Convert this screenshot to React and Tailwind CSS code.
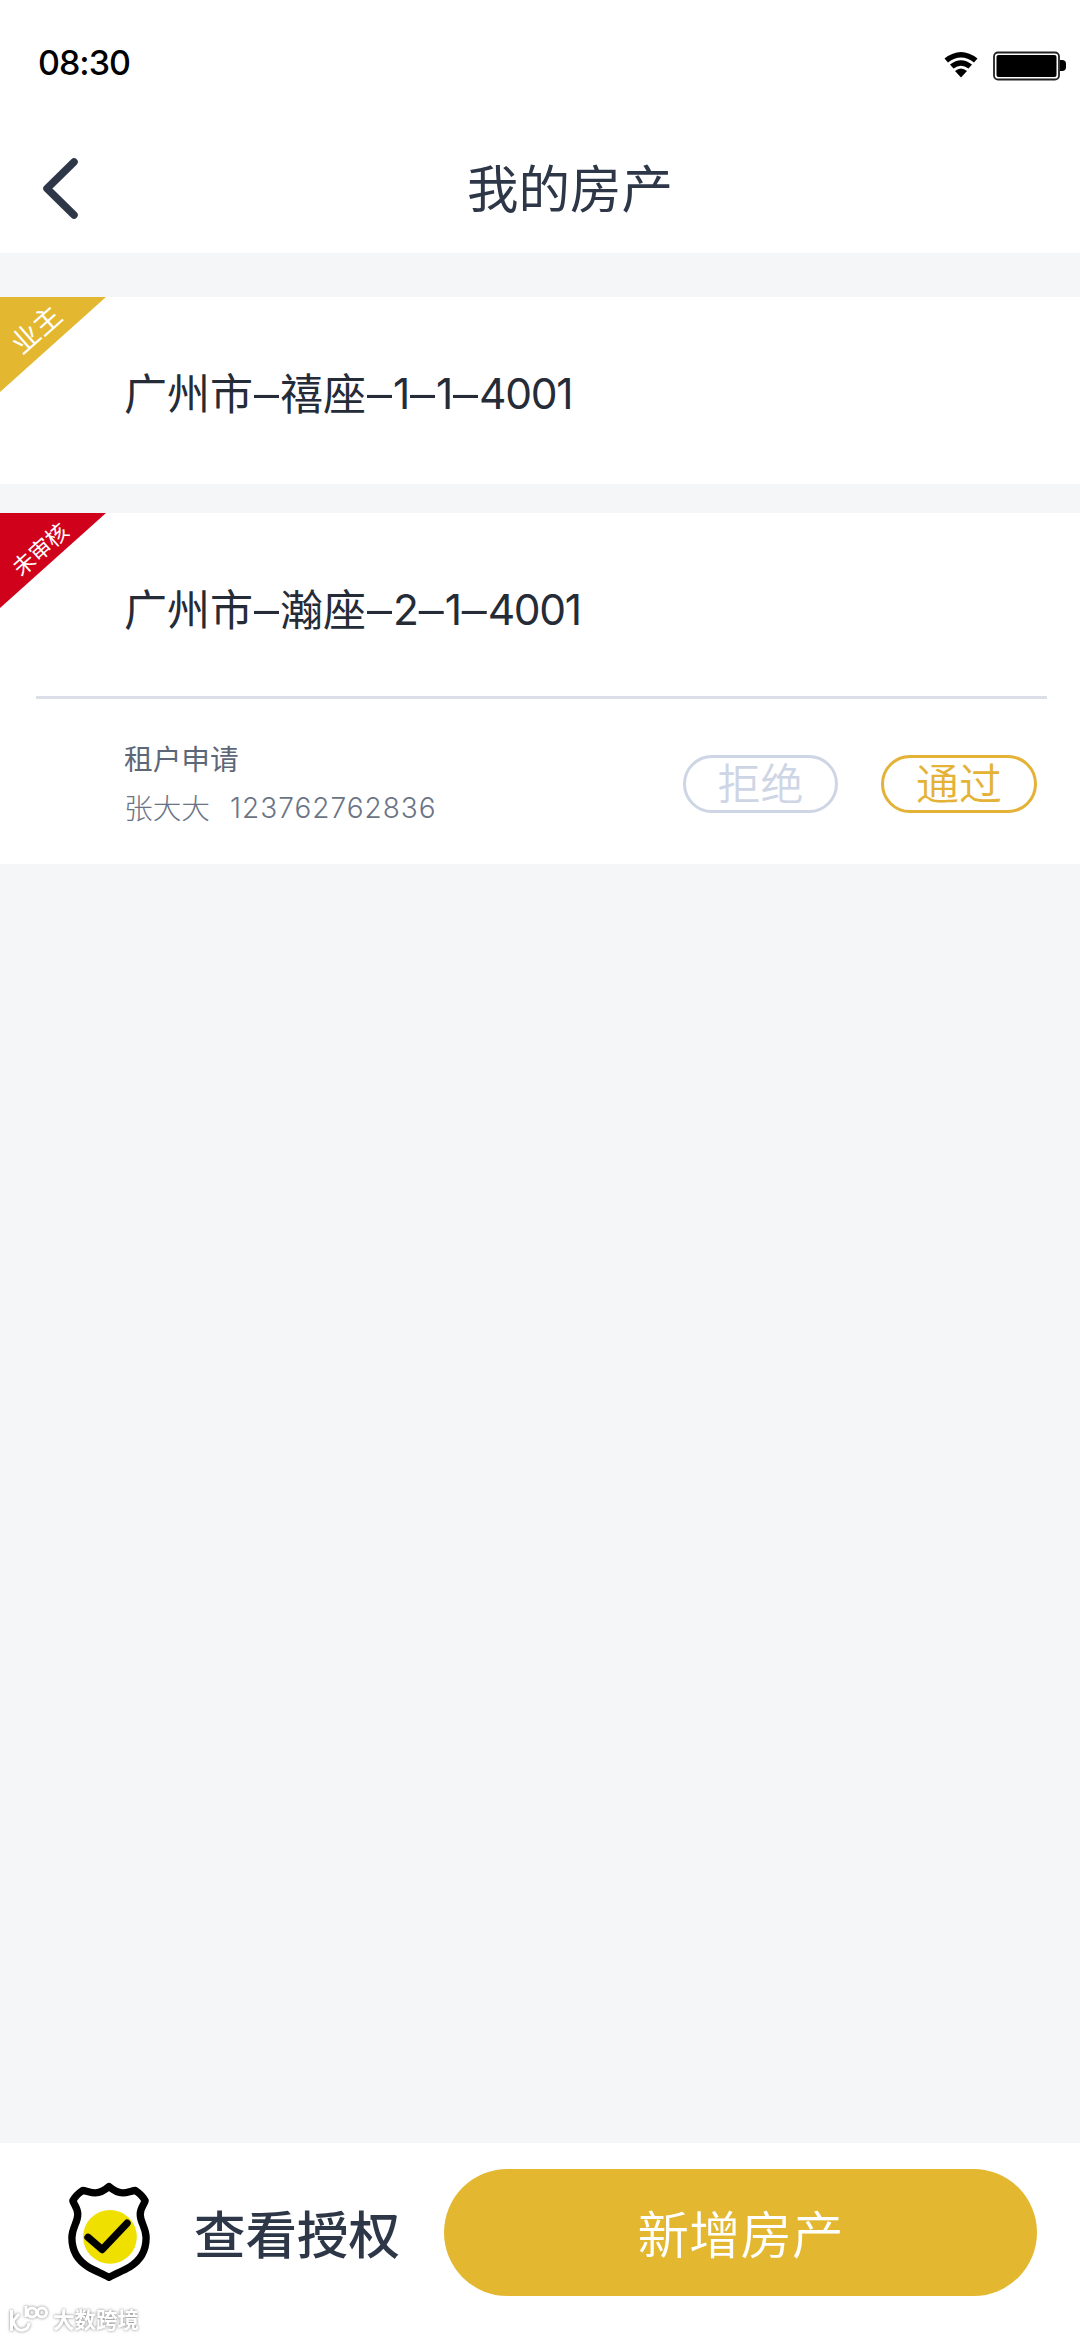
import React from 'react';

const properties = [
  { id: 1, name: '广州市–禧座–1–1–4001', tag: '业主', status: 'owner' },
  {
    id: 2,
    name: '广州市–瀚座–2–1–4001',
    tag: '未审核',
    status: 'pending',
    request: { title: '租户申请', person: '张大大', phone: '123762762836' }
  }
];

const ribbonStyles = {
  owner: {
    fill: 'text-[#e3b830]',
    label: 'left-[3px] top-[15px] w-16 text-[28px] leading-8'
  },
  pending: {
    fill: 'text-[#d0021b]',
    label: 'left-[1px] top-[19px] w-[76px] text-[22px] leading-8'
  }
};

const StatusBar = () => (
  <div className="flex h-[126px] items-start justify-between pl-[38px] pr-[14px]">
    <span className="mt-[42px] font-['Inter'] text-[34px] font-medium leading-[42px] tracking-[-1px] text-black">
      08:30
    </span>
    <div className="mt-[51px] flex items-start gap-[14px]">
      <svg className="h-[27px] w-[36px]" viewBox="0 0 36 27" fill="none">
        <path d="M1.500 7.500Q18-5.500 34.500 7.500L31 11.500Q18 1.500 5 11.500Z" fill="#000" />
        <path d="M7 13.500Q18 5 29 13.500L25.500 17.500Q18 12 10.500 17.500Z" fill="#000" />
        <path d="M12 20Q18 15 24 20L18 26.500Z" fill="#000" />
      </svg>
      <svg className="h-[30px] w-[73px]" viewBox="0 0 73 30" fill="none">
        <rect x="1" y="1.500" width="65" height="27" rx="4" stroke="#222" strokeWidth="1.800" />
        <rect x="3.500" y="4" width="60" height="22" rx="2" fill="#000" />
        <path d="M67 9h2a4 4 0 0 1 4 4v3a4 4 0 0 1-4 4h-2Z" fill="#000" />
      </svg>
    </div>
  </div>
);

const Header = () => (
  <div className="grid h-[127px] grid-cols-[1fr_auto_1fr] items-start">
    <svg className="ml-[42px] mt-[30px] h-[64px] w-[38px]" viewBox="0 0 38 64" fill="none">
      <path d="M32 6L5 32.500L32 59" stroke="#2e3748" strokeWidth="7.500" strokeLinecap="round" strokeLinejoin="round" />
    </svg>
    <h1 className="ml-[60px] mt-[28px] text-[51.500px] leading-[64px] text-[#2e3748]">我的房产</h1>
  </div>
);

const Ribbon = ({ status, tag }) => (
  <div className="absolute left-0 top-0 h-[95px] w-[106px]">
    <svg className={`h-full w-full ${ribbonStyles[status].fill}`} viewBox="0 0 106 95">
      <path d="M0 0H106L0 95Z" fill="currentColor" />
    </svg>
    <span className={`absolute -rotate-[41.500deg] whitespace-nowrap text-center text-white ${ribbonStyles[status].label}`}>
      {tag}
    </span>
  </div>
);

const TenantRequest = ({ request }) => (
  <div className="flex h-[165px] items-start justify-between pl-[124px] pr-[43px]">
    <div className="mt-[35px] text-[28.700px] leading-[48px]">
      <p className="text-[#5d6778]">{request.title}</p>
      <p className="flex gap-[20px] font-light text-[#6b7485]">
        <span className="mt-px">{request.person}</span>
        <span className="mt-[2px] font-['Inter','Noto_Sans_CJK_SC',sans-serif] text-[28px] tracking-[1px]">{request.phone}</span>
      </p>
    </div>
    <div className="mt-[56px] flex gap-[43px] text-[43px] font-[350] leading-none">
      <button className="flex h-[58px] w-[155px] items-center justify-center rounded-full border-[3px] border-[#ced5e4] pb-[6px] text-[#ced5e4]">
        拒绝
      </button>
      <button className="flex h-[58px] w-[156px] items-center justify-center rounded-full border-[3px] border-[#e3b236] pb-[6px] text-[#e3b236]">
        通过
      </button>
    </div>
  </div>
);

// wide dashes between the parts, numbers are set tighter than the Chinese parts
const PropertyName = ({ name }) => (
  <h2 className="mt-[11px] flex font-['Inter','Noto_Sans_CJK_SC',sans-serif] text-[43px] leading-[60px] text-[#252c38] [font-feature-settings:'calt'_0]">
    {name.split('–').map((part, i) => (
      <React.Fragment key={i}>
        {i > 0 && <span className="px-px text-[50px] font-light">–</span>}
        <span className={/^\d+$/.test(part) ? 'text-[42.500px] tracking-[-1.300px]' : ''}>{part}</span>
      </React.Fragment>
    ))}
  </h2>
);

const PropertyCard = ({ property }) => (
  <div className="relative bg-white">
    <Ribbon status={property.status} tag={property.tag} />
    <div className="flex h-[183px] items-center pl-[124px]">
      <PropertyName name={property.name} />
    </div>
    {property.request ? (
      <>
        <div className="ml-9 mr-[33px] h-[3px] bg-[#dcdfe8]"></div>
        <TenantRequest request={property.request} />
      </>
    ) : (
      <div className="h-1"></div>
    )}
  </div>
);

const ShieldIcon = () => (
  <svg className="h-[100px] w-[82px]" viewBox="0 0 84 102" fill="none">
    <circle cx="43" cy="57" r="27.500" fill="#f0e000" />
    <path
      d="M42 5.500C38 9 34 12 28 12C23 12 18 9.500 15 9.500C12 11.500 7 16 5 20C6 24 10 27 10 34C10 43 4 47 4 58C4 72 11 82 21 88C28 92 36 95 42 98.500C48 95 56 92 63 88C73 82 80 72 80 58C80 47 74 43 74 34C74 27 78 24 79 20C77 16 72 11.500 69 9.500C66 9.500 61 12 56 12C50 12 46 9 42 5.500Z"
      stroke="#000"
      strokeWidth="7.500"
      strokeLinejoin="round"
    />
    <path d="M20.500 57.500L35 70L60.500 43" stroke="#000" strokeWidth="7.500" strokeLinecap="round" strokeLinejoin="round" />
  </svg>
);

const Watermark = () => (
  <div className="absolute bottom-[5px] left-[9px] flex items-center gap-[4px] drop-shadow-[0_0_1.500px_rgba(0,0,0,0.5)]">
    <svg className="h-[28px] w-[40px]" viewBox="0 0 40 28" fill="none" stroke="#fff" strokeWidth="3">
      <path d="M2.500 4V25M10 8L4 15C6 22 10 25 14 24C19 23 20 20 20 17" />
      <path d="M17 0V11" />
      <circle cx="23" cy="6.500" r="4.500" />
      <circle cx="33" cy="6.500" r="4.500" />
    </svg>
    <span className="-mt-[3px] text-[21.500px] font-bold leading-[28px] text-white">大数跨境</span>
  </div>
);

const BottomBar = () => (
  <div className="relative flex h-[196px] items-start bg-white pl-[68px] pr-[43px]">
    <div className="mt-[38px]">
      <ShieldIcon />
    </div>
    <span className="ml-[44px] mt-[57px] text-[51.500px] font-medium leading-[64px] text-[#2e3748]">查看授权</span>
    <button className="ml-auto mt-[26px] flex h-[127px] w-[593px] items-center justify-center rounded-full bg-[#e3b830] pb-[2px] text-[51.500px] font-[350] text-white">
      新增房产
    </button>
    <Watermark />
  </div>
);

const App = () => (
  <div className="flex h-[2339px] w-[1080px] flex-col overflow-hidden bg-[#f5f6f8] font-['Noto_Sans_CJK_SC',sans-serif]">
    <div className="bg-white">
      <StatusBar />
      <Header />
    </div>
    <div className="mt-11 flex flex-1 flex-col gap-[29px]">
      {properties.map((property) => (
        <PropertyCard key={property.id} property={property} />
      ))}
    </div>
    <BottomBar />
  </div>
);

export default App;
